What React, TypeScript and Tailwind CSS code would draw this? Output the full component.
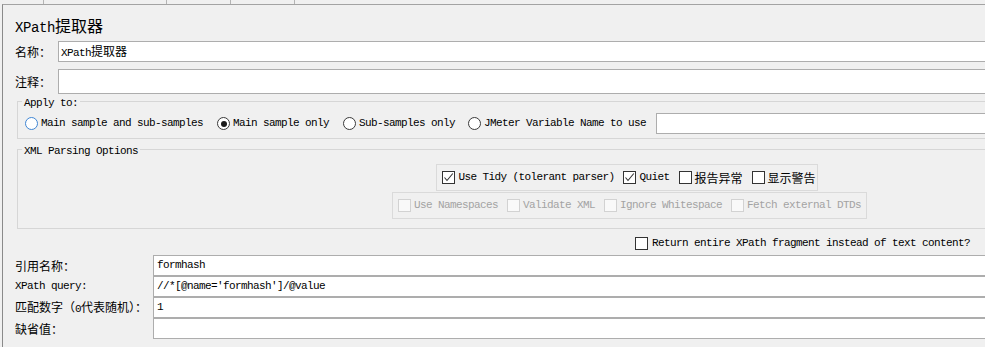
import React from "react";

const CJK_RE = /([\u3000-\u303f\u4e00-\u9fff\uff00-\uffef]+)/;

function Txt({
  s,
  lg = false,
  className = "",
}: {
  s: string;
  lg?: boolean;
  className?: string;
}) {
  const parts = s.split(CJK_RE);
  return (
    <span className={"inline-flex items-baseline whitespace-pre leading-none " + className}>
      {parts.map((p, i) =>
        p === "" ? null : i % 2 === 1 ? (
          <span
            key={i}
            className={
              lg
                ? "font-['Noto_Sans_CJK_SC',sans-serif] text-[16px] leading-none"
                : "font-['Noto_Sans_CJK_SC',sans-serif] text-[12px] leading-none"
            }
          >
            {p}
          </span>
        ) : (
          <span
            key={i}
            className={
              lg
                ? "font-['Liberation_Mono',monospace] text-[14px] tracking-[-0.4px] leading-none"
                : "font-['Liberation_Mono',monospace] text-[11px] tracking-[-0.6px] leading-none"
            }
          >
            {p}
          </span>
        )
      )}
    </span>
  );
}

function Radio({
  checked = false,
  focused = false,
  className = "",
}: {
  checked?: boolean;
  focused?: boolean;
  className?: string;
}) {
  return (
    <span
      className={
        "flex h-[13px] w-[13px] shrink-0 items-center justify-center rounded-full border bg-white " +
        (focused ? "border-[#3f86d4] " : "border-[#3a3a3a] ") +
        className
      }
    >
      {checked && <span className="h-[6px] w-[6px] rounded-full bg-[#1a1a1a]" />}
    </span>
  );
}

function Check({
  checked = false,
  disabled = false,
  className = "",
}: {
  checked?: boolean;
  disabled?: boolean;
  className?: string;
}) {
  return (
    <span
      className={
        "flex h-[13px] w-[13px] shrink-0 items-center justify-center border " +
        (disabled ? "border-[#d2d2d2] bg-[#f9f9f9] " : "border-[#333333] bg-white ") +
        className
      }
    >
      {checked && (
        <svg width="11" height="11" viewBox="0 0 11 11" fill="none">
          <path d="M1.5 5.5 L4 8.5 L9.8 1.5" stroke="#333333" strokeWidth="1.1" />
        </svg>
      )}
    </span>
  );
}

function FieldRow({ label, value }: { label: string; value: string }) {
  return (
    <div className="flex h-[21px] items-center">
      <div className="flex w-[150px] items-center pl-[12px]">
        <Txt s={label} />
      </div>
      <div className="flex h-full flex-1 items-center border border-[#adadad] bg-white pl-[3px]">
        <Txt s={value} />
      </div>
    </div>
  );
}

function Legend({ s }: { s: string }) {
  return (
    <div className="absolute left-[4px] top-[-5px] flex h-[12px] items-center bg-[#f0f0f0] px-[2px] leading-none">
      <Txt s={s} />
    </div>
  );
}

export default function App() {
  return (
    <div className="h-[347px] w-[985px] overflow-hidden bg-[#f0f0f0] leading-none text-black">
      <div className="flex h-[4px]">
        <div className="w-[44px] border-r border-[#b4b4b4]" />
        <div className="w-[123px] border-r border-[#b4b4b4]" />
        <div className="w-[64px] border-r border-[#b4b4b4]" />
        <div className="w-[64px] border-r border-[#b4b4b4]" />
      </div>
      <div className="ml-[2px] h-[343px] w-[1254px] border-l border-t border-l-[#8a8a8a] border-t-[#a3a3a3]">
        {/* Title */}
        <div className="flex h-[36px] items-start pl-[12px] pt-[12px]">
          <Txt s="XPath提取器" lg />
        </div>

        {/* Name */}
        <div className="flex h-[21px] items-center">
          <div className="flex w-[55px] items-center pl-[12px]">
            <Txt s="名称：" />
          </div>
          <div className="flex h-full flex-1 items-center border border-[#adadad] bg-white pl-[2px]">
            <Txt s="XPath提取器" />
          </div>
        </div>

        {/* Comment */}
        <div className="mt-[7px] flex h-[25px] items-center">
          <div className="flex w-[55px] items-center pl-[12px]">
            <Txt s="注释：" />
          </div>
          <div className="h-full flex-1 border border-[#adadad] bg-white" />
        </div>

        {/* Apply to */}
        <div className="relative mx-[14px] mt-[7px] border border-[#d6d6d6] pb-[4px] pl-[7px] pt-[10px]">
          <Legend s="Apply to:" />
          <div className="flex h-[22px] items-center pt-[1px]">
            <Radio focused />
            <Txt s="Main sample and sub-samples" className="ml-[3px]" />
            <Radio checked className="ml-[14px]" />
            <Txt s="Main sample only" className="ml-[3px]" />
            <Radio className="ml-[14px]" />
            <Txt s="Sub-samples only" className="ml-[3px]" />
            <Radio className="ml-[13px]" />
            <Txt s="JMeter Variable Name to use" className="ml-[3px]" />
            <div className="ml-[10px] h-full flex-1 border border-[#adadad] bg-white" />
          </div>
        </div>

        {/* XML Parsing Options */}
        <div className="relative mx-[14px] mt-[10px] flex flex-col items-center border border-[#d6d6d6] pb-[9px] pt-[14px]">
          <Legend s="XML Parsing Options" />
          <div className="mr-[5px] flex h-[27px] items-center border border-[#dadada] pl-[5px] pr-[1px]">
            <Check checked />
            <Txt s="Use Tidy (tolerant parser)" className="ml-[3px]" />
            <Check checked className="ml-[9px]" />
            <Txt s="Quiet" className="ml-[3px]" />
            <Check className="ml-[9px]" />
            <Txt s="报告异常" className="ml-[3px]" />
            <Check className="ml-[9px]" />
            <Txt s="显示警告" className="ml-[3px]" />
          </div>
          <div className="mt-[1px] flex h-[27px] items-center border border-[#dadada] pl-[5px] pr-[5px]">
            <Check disabled />
            <Txt s="Use Namespaces" className="ml-[3px] text-[#a3a3a3]" />
            <Check disabled className="ml-[9px]" />
            <Txt s="Validate XML" className="ml-[3px] text-[#a3a3a3]" />
            <Check disabled className="ml-[9px]" />
            <Txt s="Ignore Whitespace" className="ml-[3px] text-[#a3a3a3]" />
            <Check disabled className="ml-[9px]" />
            <Txt s="Fetch external DTDs" className="ml-[3px] text-[#a3a3a3]" />
          </div>
        </div>

        {/* Return fragment */}
        <div className="flex h-[26px] items-center pl-[632px] pt-[3px]">
          <Check />
          <Txt s="Return entire XPath fragment instead of text content?" className="ml-[4px]" />
        </div>

        <FieldRow label="引用名称：" value="formhash" />
        <FieldRow label="XPath query:" value="//*[@name='formhash']/@value" />
        <FieldRow label="匹配数字（0代表随机）：" value="1" />
        <FieldRow label="缺省值：" value="" />
      </div>
    </div>
  );
}
